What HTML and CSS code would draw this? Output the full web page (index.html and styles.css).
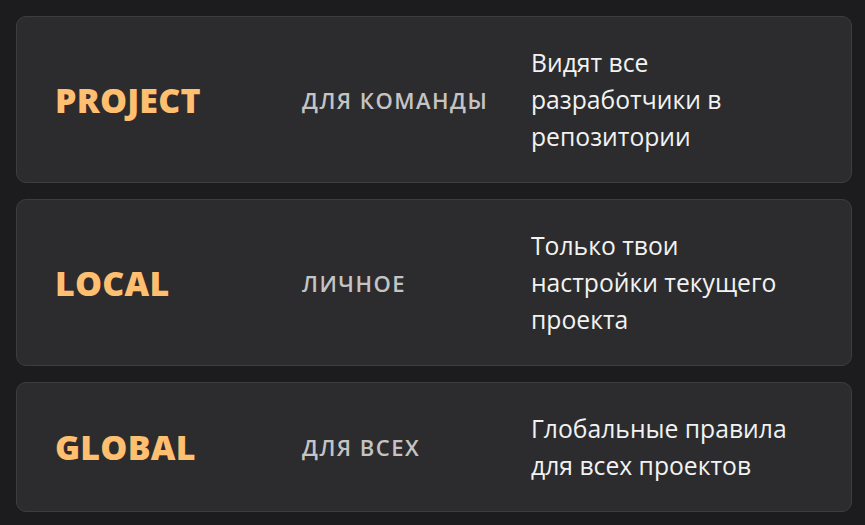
FILE: index.html
```html
<!DOCTYPE html>
<html lang="ru">
<head>
<meta charset="utf-8">
<link rel="stylesheet" href="styles.css">
</head>
<body>
<div class="list">
  <div class="card">
    <div class="name">PROJECT</div>
    <div class="label">ДЛЯ КОМАНДЫ</div>
    <div class="desc">Видят все разработчики в репозитории</div>
  </div>
  <div class="card">
    <div class="name">LOCAL</div>
    <div class="label">ЛИЧНОЕ</div>
    <div class="desc">Только твои настройки текущего проекта</div>
  </div>
  <div class="card">
    <div class="name">GLOBAL</div>
    <div class="label">ДЛЯ ВСЕХ</div>
    <div class="desc">Глобальные правила для всех проектов</div>
  </div>
</div>
</body>
</html>
```
FILE: styles.css
```css
html, body {
  margin: 0;
  padding: 0;
  background: #1c1c1e;
}
body {
  padding: 16px 13px 16px 16px;
  font-family: "Open Sans", "Noto Sans", sans-serif;
}
.list {
  display: flex;
  flex-direction: column;
  gap: 16px;
}
.card {
  display: grid;
  grid-template-columns: 247px 229px 1fr;
  align-items: center;
  padding: 27px 40px 27px 38px;
  background: #2c2c2e;
  border: 1px solid #3d3d40;
  border-radius: 10px;
}
.name {
  font-size: 34px;
  font-weight: 800;
  color: #ffbf70;
  letter-spacing: 0.2px;
}
.label {
  font-size: 22px;
  font-weight: 600;
  color: #c4c4c4;
  letter-spacing: 1.5px;
}
.desc {
  font-size: 24.7px;
  line-height: 37px;
  color: #f2f2f2;
  max-width: 268px;
}
```
